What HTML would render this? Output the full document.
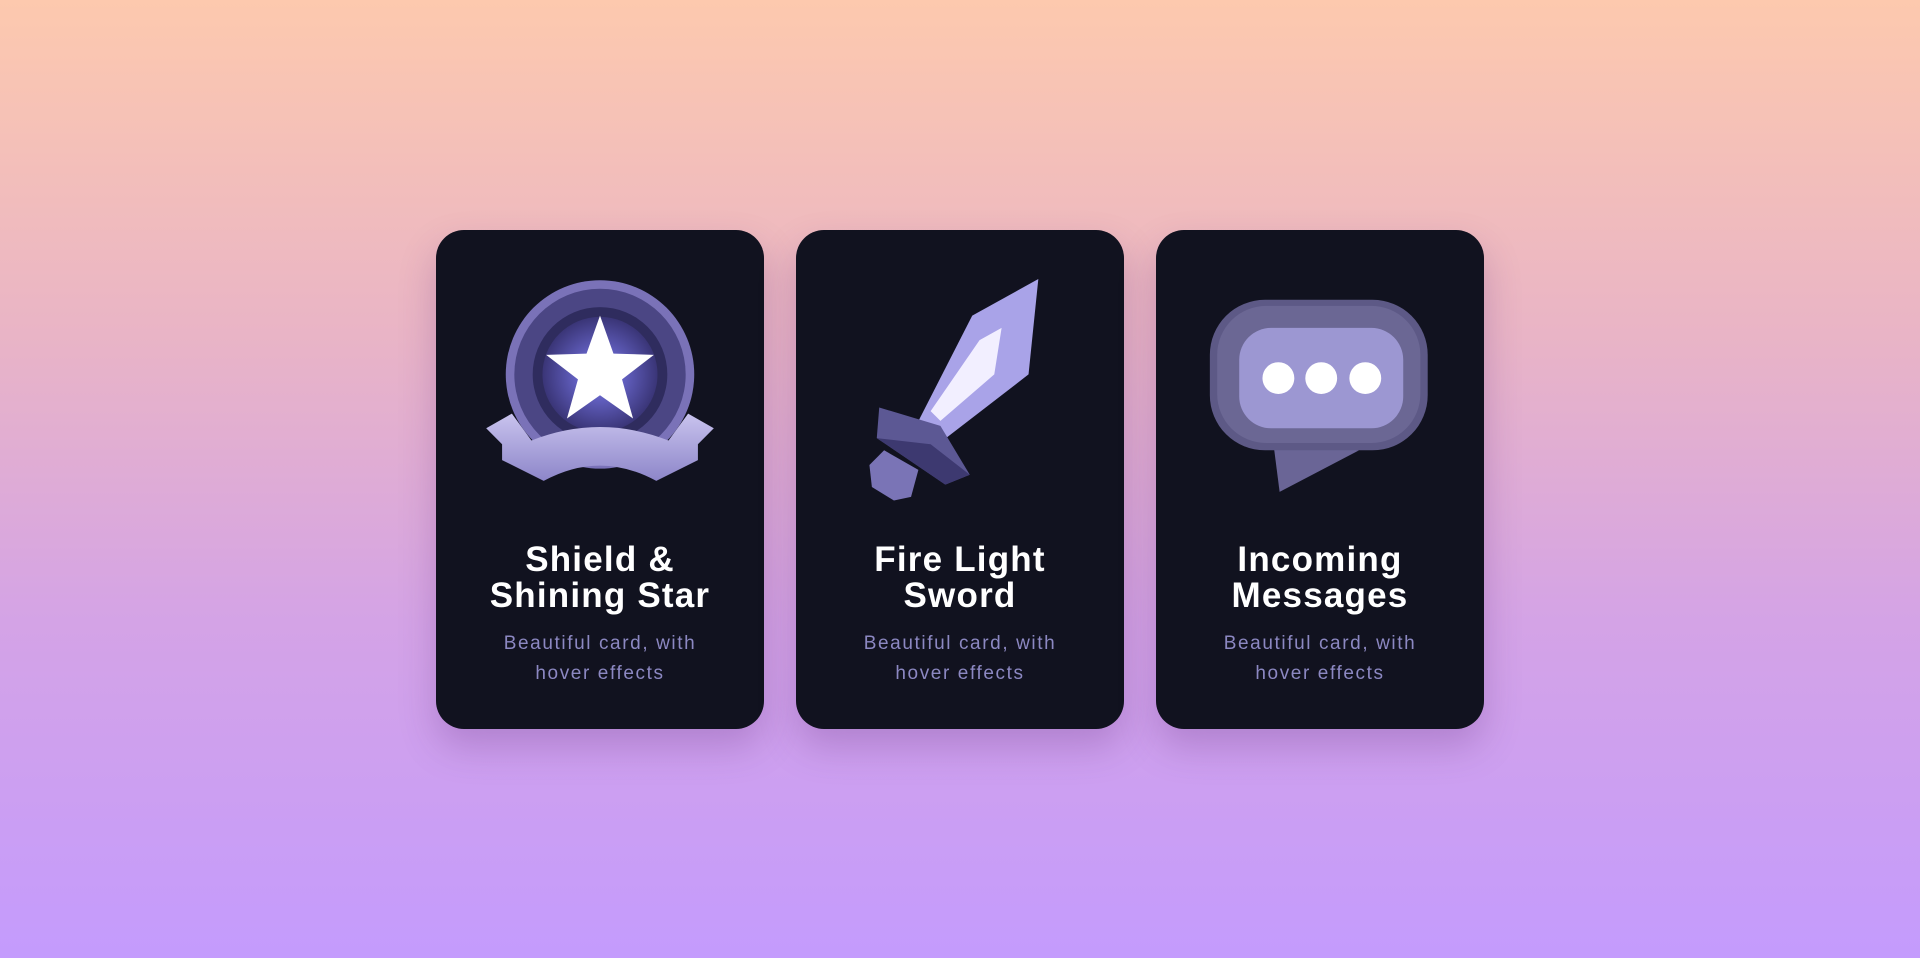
<!DOCTYPE html>
<html><head><meta charset="utf-8"><style>
html,body{margin:0;padding:0}
body{width:1920px;height:958px;overflow:hidden;background:linear-gradient(180deg,#fdc9ae 0%,#e9b4c6 35%,#d4a3e6 65%,#c49bfd 100%);font-family:"Liberation Sans",sans-serif;position:relative}
.card{position:absolute;top:230px;width:328px;height:499px;background:#11121f;border-radius:28px;box-shadow:0 18px 36px rgba(90,40,120,.25)}
.card svg{position:absolute;left:0;top:0}
.t{position:absolute;left:0;right:0;top:312px;text-align:center;color:#fff;font-weight:bold;font-size:35px;line-height:36px;letter-spacing:1.2px}
.s{position:absolute;left:0;right:0;top:399px;text-align:center;color:#8c88c2;font-size:19px;line-height:30px;letter-spacing:1.6px}
</style></head><body>
<div class="card" style="left:436px">
<svg width="328" height="499" viewBox="0 0 268 407.7">
<defs><radialGradient id="g1" cx="50%" cy="50%" r="50%"><stop offset="0" stop-color="#7f7ef5"/><stop offset="1" stop-color="#3a3577"/></radialGradient>
<linearGradient id="r1" x1="0" y1="0" x2="0" y2="1"><stop offset="0" stop-color="#c9c3ee"/><stop offset="1" stop-color="#8d86c9"/></linearGradient></defs>
<circle cx="134" cy="118" r="77" fill="#7a72b8"/>
<circle cx="134" cy="118" r="70" fill="#4b4684"/>
<circle cx="134" cy="118" r="55" fill="#2f2c5e"/>
<circle cx="134" cy="118" r="47" fill="url(#g1)"/>
<polygon points="134,70 145,101 178,102 152,122 161,154 134,135 107,154 116,122 90,102 123,101" fill="#fff"/>
<path d="M41,162 L62,150 L78,172 Q134,150 190,172 L206,150 L227,162 L214,175 L214,188 L180,205 Q134,180 88,205 L54,188 L54,175 Z" fill="url(#r1)"/>
</svg>
<div class="t">Shield &amp;<br>Shining Star</div>
<div class="s">Beautiful card, with<br>hover effects</div>
</div>
<div class="card" style="left:796px">
<svg width="328" height="499" viewBox="0 0 268 407.7">
<polygon points="198,40 190,118 120,172 98,160 144,70" fill="#a9a3e8"/>
<polygon points="168,80 162,118 118,156 110,148 150,90" fill="#f2efff"/>
<polygon points="68,145 118,160 142,200 122,208 66,170" fill="#5c5894"/>
<polygon points="66,170 122,208 142,200 110,175" fill="#3d3970"/>
<polygon points="72,180 100,196 94,218 80,221 62,210 60,192" fill="#7a74b6"/>
</svg>
<div class="t">Fire Light<br>Sword</div>
<div class="s">Beautiful card, with<br>hover effects</div>
</div>
<div class="card" style="left:1156px">
<svg width="328" height="499" viewBox="0 0 268 407.7">
<path d="M96,175 L101,214 L166,180 Z" fill="#6a6596"/>
<rect x="44" y="57" width="178" height="123" rx="45" fill="#5d5986"/>
<rect x="50" y="62" width="166" height="112" rx="40" fill="#6b6794"/>
<rect x="68" y="80" width="134" height="82" rx="26" fill="#9c97d2"/>
<circle cx="100" cy="121" r="13" fill="#fff"/>
<circle cx="135" cy="121" r="13" fill="#fff"/>
<circle cx="171" cy="121" r="13" fill="#fff"/>
</svg>
<div class="t">Incoming<br>Messages</div>
<div class="s">Beautiful card, with<br>hover effects</div>
</div>
</body></html>
